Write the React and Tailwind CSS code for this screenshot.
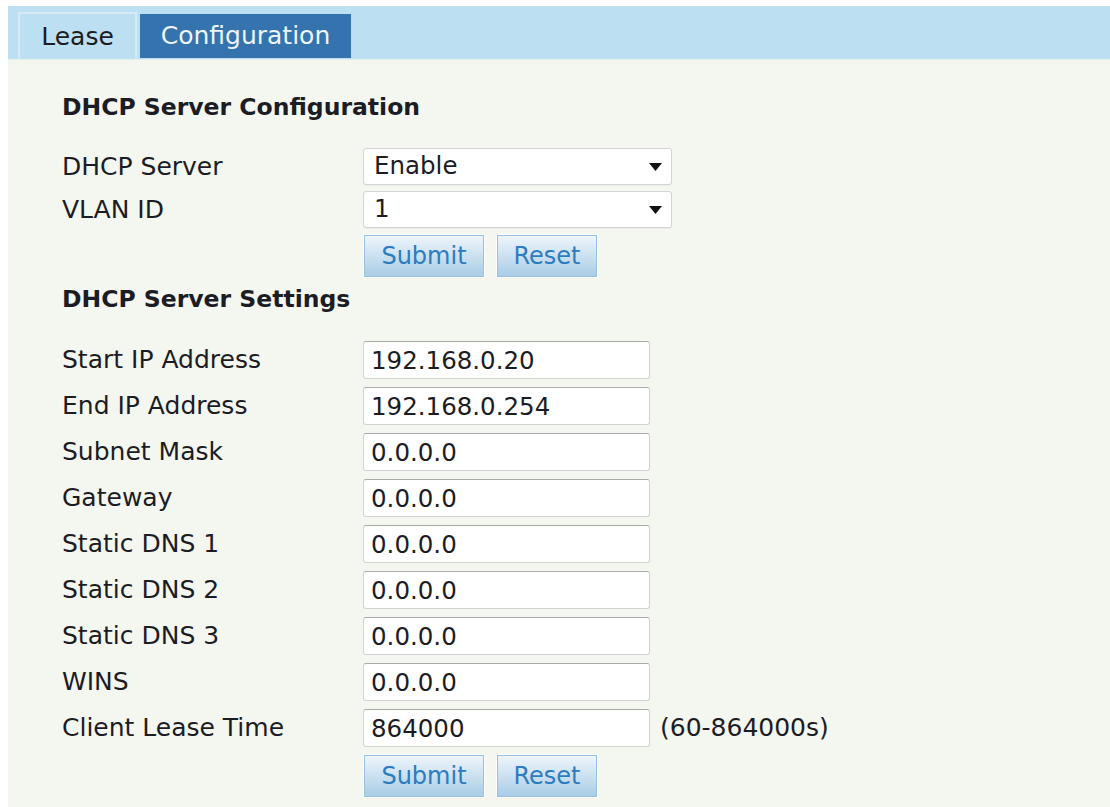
import React, { useState } from 'react';

const font = { fontFamily: '"DejaVu Sans", Verdana, sans-serif' };

const settings = [
  { label: 'Start IP Address', value: '192.168.0.20' },
  { label: 'End IP Address', value: '192.168.0.254' },
  { label: 'Subnet Mask', value: '0.0.0.0' },
  { label: 'Gateway', value: '0.0.0.0' },
  { label: 'Static DNS 1', value: '0.0.0.0' },
  { label: 'Static DNS 2', value: '0.0.0.0' },
  { label: 'Static DNS 3', value: '0.0.0.0' },
  { label: 'WINS', value: '0.0.0.0' },
  { label: 'Client Lease Time', value: '864000', hint: '(60-864000s)' },
];

function Btn({ children, w }) {
  return (
    <button
      className={`h-[42px] ${w} border border-[#96c1e2] bg-gradient-to-b from-[#eef5fb] to-[#a9cce6] text-[24px] text-[#2c7cbf] shadow-[0_0_0_1px_#ffffff]`}
    >
      {children}
    </button>
  );
}

function Buttons() {
  return (
    <div className="flex gap-[13px] pl-[302px]">
      <Btn w="w-[120px]">Submit</Btn>
      <Btn w="w-[100px]">Reset</Btn>
    </div>
  );
}

function Select({ value }) {
  return (
    <div className="relative flex h-[37px] w-[309px] items-center rounded-[3px] border border-[#d4d4d4] bg-white pl-[10px] text-[24.5px] text-[#1c1c24] shadow-[0_1px_1px_rgba(0,0,0,0.04)]">
      {value}
      <svg className="absolute right-[9px] top-[14px]" width="13" height="8" viewBox="0 0 13 8">
        <path d="M0 0 L13 0 L6.5 8 Z" fill="#111" />
      </svg>
    </div>
  );
}

export default function App() {
  const [tab] = useState('config');

  return (
    <div className="min-h-screen bg-white pl-[8px] pt-[6px]" style={font}>
      {/* tab strip */}
      <div className="flex h-[53px] items-end gap-[3px] bg-[#bcdff1] pl-[10px]">
        <div className="flex h-[47px] w-[119px] items-center justify-center border-2 border-b-0 border-[#d6eaf5] text-[25px] text-[#1c1c24]">
          Lease
        </div>
        <div
          className={`mb-[1px] flex h-[44px] w-[211px] items-center justify-center text-[25px] ${
            tab === 'config' ? 'bg-[#3473ad] text-[#eef4fa]' : ''
          }`}
        >
          Configuration
        </div>
      </div>

      <div className="min-h-[748px] border-t border-[#e2eee9] bg-[#f4f6f0] pl-[54px] pt-[32px] text-[25px] text-[#1c1c24]">
        <h3 className="text-[23.5px] font-bold leading-[30px]">DHCP Server Configuration</h3>

        <div className="mt-[26px] flex flex-col gap-[5px]">
          <div className="flex items-center">
            <span className="w-[301px]">DHCP Server</span>
            <Select value="Enable" />
          </div>
          <div className="flex items-center">
            <span className="w-[301px]">VLAN ID</span>
            <Select value="1" />
          </div>
        </div>
        <div className="mt-[7px]">
          <Buttons />
        </div>

        <h3 className="mt-[7px] text-[23.5px] font-bold leading-[30px]">DHCP Server Settings</h3>

        <div className="mt-[27px] flex flex-col gap-[8px]">
          {settings.map((s) => (
            <div key={s.label} className="flex items-center">
              <span className="w-[301px]">{s.label}</span>
              <input
                readOnly
                value={s.value}
                className="h-[38px] w-[287px] rounded-[3px] border border-[#d2d2d2] border-t-[#a9a9a9] bg-white pl-[7px] text-[24.5px] text-[#1c1c24] outline-none"
                style={font}
              />
              {s.hint && <span className="ml-[10px]">{s.hint}</span>}
            </div>
          ))}
        </div>
        <div className="mt-[8px]">
          <Buttons />
        </div>
      </div>
    </div>
  );
}
